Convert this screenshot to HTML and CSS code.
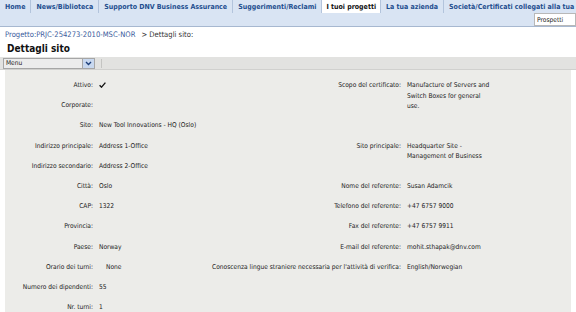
FILE: index.html
```html
<!DOCTYPE html>
<html lang="it">
<head>
    <meta charset="UTF-8">
    <title>Dettagli sito</title>
    <link rel="stylesheet" href="styles.css">
</head>
<body>
    <div class="topnav">
        <ul class="tabs">
            <li>Home</li>
            <li>News/Biblioteca</li>
            <li>Supporto DNV Business Assurance</li>
            <li>Suggerimenti/Reclami</li>
            <li class="active">I tuoi progetti</li>
            <li>La tua azienda</li>
            <li>Società/Certificati collegati alla tua azienda</li>
        </ul>
        <div class="subbar">
            <input class="search" type="text" value="Prospetti">
        </div>
    </div>

    <div class="header">
        <div class="crumbs"><a href="#">Progetto:PRJC-254273-2010-MSC-NOR</a><span class="here">&gt; Dettagli sito:</span></div>
        <h1>Dettagli sito</h1>
    </div>

    <div class="toolbar">
        <div class="menu-select">
            <span>Menu</span>
            <span class="drop">
                <svg width="7" height="5" viewBox="0 0 7 5"><path d="M1 1 L3.5 3.5 L6 1" fill="none" stroke="#1d3f7a" stroke-width="1.4"/></svg>
            </span>
        </div>
        <span class="tool-sep"></span>
    </div>

    <div class="details">
        <div class="label">Attivo:</div>
        <div class="value">
            <svg class="check" width="7" height="6" viewBox="0 0 7 6"><path d="M0.6 3.2 L2.5 5.2 L6.4 0.6" fill="none" stroke="#111" stroke-width="1.3"/></svg>
        </div>
        <div class="label">Scopo del certificato:</div>
        <div class="value wrap">Manufacture of Servers and Switch Boxes for general use.</div>

        <div class="label">Corporate:</div>
        <div class="value"></div>
        <div class="label"></div>
        <div class="value"></div>

        <div class="label">Sito:</div>
        <div class="value">New Tool Innovations - HQ (Oslo)</div>
        <div class="label"></div>
        <div class="value"></div>

        <div class="label">Indirizzo principale:</div>
        <div class="value">Address 1-Office</div>
        <div class="label">Sito principale:</div>
        <div class="value wrap">Headquarter Site - Management of Business</div>

        <div class="label">Indirizzo secondario:</div>
        <div class="value">Address 2-Office</div>
        <div class="label"></div>
        <div class="value"></div>

        <div class="label">Città:</div>
        <div class="value">Oslo</div>
        <div class="label">Nome del referente:</div>
        <div class="value">Susan Adamcik</div>

        <div class="label">CAP:</div>
        <div class="value">1322</div>
        <div class="label">Telefono del referente:</div>
        <div class="value">+47 6757 9000</div>

        <div class="label">Provincia:</div>
        <div class="value"></div>
        <div class="label">Fax del referente:</div>
        <div class="value">+47 6757 9911</div>

        <div class="label">Paese:</div>
        <div class="value">Norway</div>
        <div class="label">E-mail del referente:</div>
        <div class="value">mohit.sthapak@dnv.com</div>

        <div class="label">Orario dei turni:</div>
        <div class="value indent">None</div>
        <div class="label">Conoscenza lingue straniere necessaria per l'attività di verifica:</div>
        <div class="value">English/Norwegian</div>

        <div class="label">Numero dei dipendenti:</div>
        <div class="value">55</div>
        <div class="label"></div>
        <div class="value"></div>

        <div class="label">Nr. turni:</div>
        <div class="value">1</div>
        <div class="label"></div>
        <div class="value"></div>
    </div>
</body>
</html>
```

FILE: styles.css
```css
body {
    margin: 0;
    padding: 0;
    font-family: "DejaVu Sans Condensed", "DejaVu Sans", sans-serif;
    font-size: 6.6px;
    color: #222;
    background-color: #ffffff;
}

/* top navigation */
.topnav {
    background-color: #d9e4f3;
    border-bottom: 1px solid #a7b8d0;
}
.tabs {
    display: flex;
    margin: 0;
    padding: 0;
    list-style: none;
    height: 13px;
    white-space: nowrap;
    overflow: hidden;
}
.tabs li {
    padding: 0 5px;
    line-height: 14px;
    font-weight: bold;
    font-size: 7px;
    color: #1f4f8f;
    border-right: 1px solid #b3c4dc;
}
.tabs li.active {
    background-color: #ffffff;
    color: #111111;
    padding: 0 4px;
}
.subbar {
    display: flex;
    justify-content: flex-end;
    height: 13px;
    align-items: flex-end;
}
.search {
    width: 38px;
    height: 11px;
    margin: 0;
    padding: 0 0 0 2px;
    border: 1px solid #b8b8b8;
    font-family: inherit;
    font-size: 6.6px;
    color: #222;
    background-color: #ffffff;
}

/* header */
.header {
    padding: 3px 0 2px 5px;
}
.crumbs {
    line-height: 10px;
    font-size: 7.6px;
    color: #333;
}
.crumbs a {
    color: #3a5b9c;
    text-decoration: none;
}
.crumbs .here {
    margin-left: 6px;
}
.header h1 {
    margin: 2px 0 0 2px;
    font-size: 10px;
    line-height: 13px;
    color: #111;
}

/* toolbar */
.toolbar {
    display: flex;
    align-items: center;
    height: 12px;
    padding-left: 3px;
    background-color: #e2e2e0;
    border-bottom: 1px solid #d0d0ce;
}
.menu-select {
    display: flex;
    align-items: center;
    justify-content: space-between;
    width: 88px;
    height: 9px;
    border: 1px solid #a6a6a6;
    background-color: #ececec;
    padding-left: 2px;
    box-sizing: content-box;
}
.menu-select .drop {
    display: flex;
    align-items: center;
    justify-content: center;
    width: 11px;
    height: 9px;
    background-color: #c8d8ef;
    border-left: 1px solid #a6a6a6;
}
.tool-sep {
    width: 1px;
    height: 9px;
    margin-left: 6px;
    background-color: #c4c4c2;
}

/* detail grid */
.details {
    display: grid;
    grid-template-columns: 94px 106px 202px 1fr;
    grid-template-rows: repeat(11, 20.2px) 10px;
    margin: 0 5px;
    padding-top: 10px;
    background-color: #ecece9;
}
.label {
    text-align: right;
    padding-right: 6px;
    line-height: 10.5px;
    white-space: nowrap;
    color: #222;
}
.value {
    line-height: 10.5px;
    white-space: nowrap;
}
.value.wrap {
    white-space: normal;
    width: 85px;
}
.value.indent {
    padding-left: 7px;
}
.check {
    margin-top: 2px;
}
```
